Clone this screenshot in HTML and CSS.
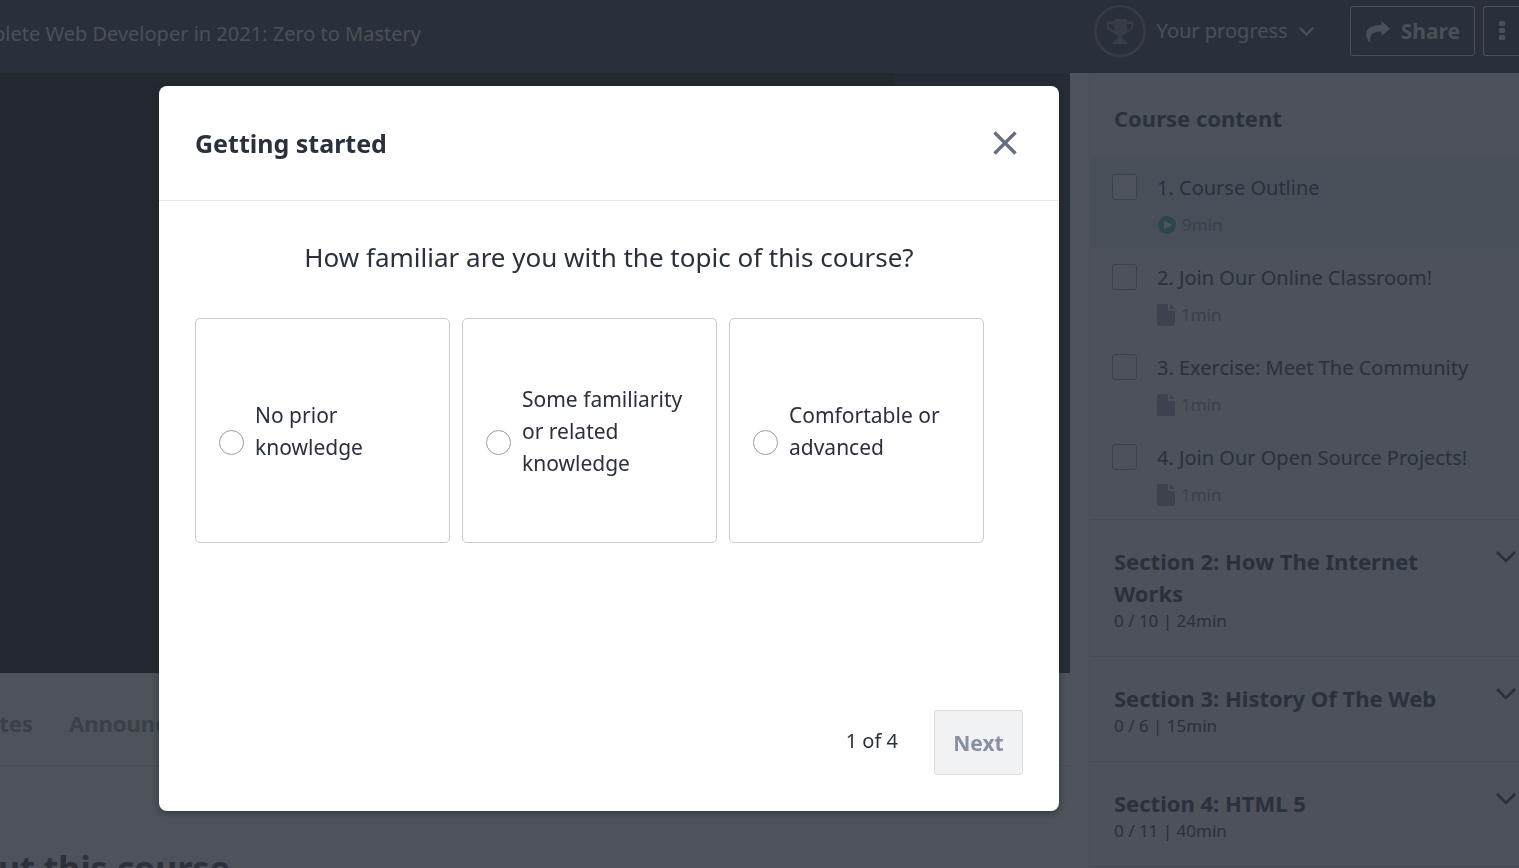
FILE: index.html
```html
<!DOCTYPE html>
<html lang="en">
<head>
<meta charset="utf-8">
<title>The Complete Web Developer in 2021: Zero to Mastery</title>
<link rel="stylesheet" href="styles.css">
</head>
<body>
<svg class="sprite" aria-hidden="true">
  <symbol id="chevron" viewBox="0 0 20 12"><path d="M1 1l9 9 9-9" fill="none" stroke="currentColor" stroke-width="2.6"/></symbol>
  <symbol id="file" viewBox="0 0 18 22"><path d="M2 0h9v7h7v13q0 2-2 2H2q-2 0-2-2V2q0-2 2-2zM13 0l5 5h-5z" fill="currentColor"/></symbol>
</svg>
<header class="topbar">
  <div class="course-title"><span>The Complete Web Developer in 2021: Zero to Mastery</span></div>
  <div class="actions">
    <button class="progress" type="button">
      <svg class="trophy" viewBox="0 0 52 52">
        <circle cx="26" cy="26" r="24.700" fill="none" stroke="currentColor" stroke-width="2.600"/>
        <path d="M20 14h13v2.500h6.500v4q0 5.500-7.500 7.500-2 2.500-3.700 3v3q4.700.500 5.200 5H18.500q.500-4.500 5.200-5v-3q-1.700-.500-3.700-3-7.500-2-7.500-7.500v-4H20zM20 19h-5v1.500q0 3.500 5.500 5zM33 19v6.500q4.500-1.500 4.500-5V19z" fill="currentColor"/>
      </svg>
      <span>Your progress</span>
      <svg class="chev-small"><use href="#chevron"/></svg>
    </button>
    <button class="outline share" type="button">
      <svg class="share-icon" viewBox="0 0 24 21"><path d="M15.500 0l8.500 7.500-8.500 7.500v-4.500C7 10.500 3.500 13 4 21h-1C-2.500 12-.500 4.500 15.500 4z" fill="currentColor"/></svg>
      Share
    </button>
    <button class="outline more" type="button" aria-label="More">
      <svg class="dots" viewBox="0 0 6 20"><path d="M1 0h4l1 1v3l-1 1H1L0 4V1zM1 7h4l1 1v3l-1 1H1l-1-1V8zM1 14h4l1 1v3l-1 1H1l-1-1v-3z" fill="currentColor"/></svg>
    </button>
  </div>
</header>
<div class="layout">
  <main class="main">
    <div class="video"></div>
    <nav class="tabs">
      <div class="tab-past"><a href="#notes">Notes</a></div>
      <a href="#announcements">Announcements</a>
    </nav>
    <div class="about"><h2>About this course</h2></div>
  </main>
  <aside class="sidebar">
    <h2 class="side-head">Course content</h2>
    <ul class="lectures">
      <li class="lecture current">
        <input type="checkbox" id="l1"><div><label for="l1">1. Course Outline</label>
        <p class="meta"><svg class="play" viewBox="0 0 18 18"><circle cx="9" cy="9" r="9" fill="currentColor"/><path class="tri" d="M6 4.500v9L14 9z"/></svg>9min</p></div>
      </li>
      <li class="lecture">
        <input type="checkbox" id="l2"><div><label for="l2">2. Join Our Online Classroom!</label>
        <p class="meta"><svg class="file"><use href="#file"/></svg>1min</p></div>
      </li>
      <li class="lecture">
        <input type="checkbox" id="l3"><div><label for="l3">3. Exercise: Meet The Community</label>
        <p class="meta"><svg class="file"><use href="#file"/></svg>1min</p></div>
      </li>
      <li class="lecture">
        <input type="checkbox" id="l4"><div><label for="l4">4. Join Our Open Source Projects!</label>
        <p class="meta"><svg class="file"><use href="#file"/></svg>1min</p></div>
      </li>
    </ul>
    <section class="section"><div><h3>Section 2: How The Internet Works</h3><p>0 / 10 | 24min</p></div><svg class="chev"><use href="#chevron"/></svg></section>
    <section class="section"><div><h3>Section 3: History Of The Web</h3><p>0 / 6 | 15min</p></div><svg class="chev"><use href="#chevron"/></svg></section>
    <section class="section"><div><h3>Section 4: HTML 5</h3><p>0 / 11 | 40min</p></div><svg class="chev"><use href="#chevron"/></svg></section>
  </aside>
</div>
<div class="overlay">
  <form class="dialog" role="dialog" aria-labelledby="dlg-title">
    <div class="dialog-head">
      <h1 id="dlg-title">Getting started</h1>
      <button class="close" type="button" aria-label="Close"><svg viewBox="0 0 24 24"><path d="M1.500 1.500l21 21M22.500 1.500l-21 21" stroke="currentColor" stroke-width="3.400" fill="none"/></svg></button>
    </div>
    <div class="dialog-body">
      <p class="question">How familiar are you with the topic of this course?</p>
      <div class="options">
        <label class="option"><input type="radio" name="level"><span>No prior knowledge</span></label>
        <label class="option"><input type="radio" name="level"><span>Some familiarity or related knowledge</span></label>
        <label class="option"><input type="radio" name="level"><span>Comfortable or advanced</span></label>
      </div>
    </div>
    <div class="dialog-foot">
      <span class="step">1 of 4</span>
      <button class="next" type="button" disabled>Next</button>
    </div>
  </form>
</div>
</body>
</html>
```
FILE: styles.css
```css
* { box-sizing: border-box; }
body {
  margin: 0;
  height: 100vh;
  overflow: hidden;
  background: #4e525a;
  color: #2a303c;
  font: 21px/32px "Noto Sans", "Open Sans", sans-serif;
}
h1, h2, h3, p, ul { margin: 0; padding: 0; }
h2, h3 { font-size: 22px; line-height: 32px; }
ul { list-style: none; }
button { font: inherit; color: inherit; background: none; border: 0; padding: 0; }
a { color: inherit; text-decoration: none; }
input { appearance: none; margin: 0; flex: none; }
svg { display: block; flex: none; }
.sprite { display: none; }

.topbar {
  display: flex;
  justify-content: space-between;
  height: 73px;
  background: #2a303b;
  color: #4b5058;
}
.course-title {
  display: flex;
  justify-content: flex-end;
  width: 421px;
  padding-top: 18px;
  overflow: hidden;
  font-size: 20px;
  white-space: nowrap;
}
.actions { display: flex; gap: 8px; padding-top: 5px; }
.progress { display: flex; align-items: center; height: 52px; margin-right: 28px; font-size: 20px; }
.progress span { margin: 0 11px; }
.trophy { width: 52px; height: 52px; color: #363b45; }
.chev-small { width: 15px; height: 9px; }
.outline {
  display: flex;
  align-items: center;
  height: 50px;
  margin-top: 1px;
  border: 1px solid #4b5058;
  border-radius: 3px;
  font-weight: 700;
}
.share { gap: 11px; padding: 0 14px 0 15px; }
.share-icon { width: 24px; height: 21px; }
.more { width: 36px; padding-left: 15px; border-right: 0; border-radius: 3px 0 0 3px; }
.dots { width: 6px; height: 20px; }

.layout { display: grid; grid-template-columns: minmax(0, 1fr) 430px; column-gap: 19px; }
.video { height: 600px; background: linear-gradient(90deg, #24282f 83.5%, #262c36 83.5%); }
.tabs {
  display: flex;
  gap: 36px;
  height: 93px;
  padding-top: 34px;
  border-bottom: 1px solid #484c54;
  color: #3a3f48;
  font-size: 22px;
  font-weight: 700;
}
.tab-past { display: flex; justify-content: flex-end; width: 33px; overflow: hidden; }
.about { display: flex; justify-content: flex-end; width: 230px; padding-top: 80px; overflow: hidden; white-space: nowrap; }
.about h2 { font-size: 34px; line-height: 44px; color: #2c313b; }

.sidebar { border-left: 1px solid #484d56; background: #4d5159; }
.side-head { padding: 29px 24px 23px; border-bottom: 1px solid #484d56; }
.lectures { padding-bottom: 1px; }
.lecture { display: flex; gap: 20px; height: 90px; padding: 14px 0 0 22px; font-size: 20px; white-space: nowrap; }
.current { background: #484f58; }
.lecture input { width: 25px; height: 26px; margin-top: 2px; border: 1px solid #3b404b; border-radius: 3px; }
.current input { background: #4e525a; }
.meta { display: flex; align-items: center; gap: 6px; height: 28px; margin-top: 7px; color: #3b404b; font-size: 17px; }
.play { width: 18px; height: 18px; margin-left: 1px; color: #2c4650; }
.tri { fill: #4e565e; }
.file { width: 18px; height: 22px; color: #3d424e; }
.section {
  display: flex;
  justify-content: space-between;
  padding: 25px 3px 23px 24px;
  border-top: 1px solid #464b53;
}
.section:last-child { border-bottom: 1px solid #464b53; }
.section > div { max-width: 330px; }
.section p { font-size: 17px; line-height: 24px; }
.chev { width: 20px; height: 12px; margin-top: 6px; }

.overlay { position: fixed; inset: 0; padding: 86px 0 57px 159px; }
.dialog {
  display: flex;
  flex-direction: column;
  width: 900px;
  height: 100%;
  background: #fff;
  border-radius: 8px;
  box-shadow: 0 2px 6px rgba(20, 30, 40, .5);
}
.dialog-head {
  display: flex;
  align-items: center;
  justify-content: space-between;
  height: 115px;
  padding: 0 42px 0 36px;
  border-bottom: 1px solid #e6e7e9;
}
h1 { font-size: 25px; line-height: 36px; }
.close { color: #686f7d; }
.close svg { width: 24px; height: 24px; }
.dialog-body { flex: 1; padding: 38px 36px 0; }
.question { font-size: 26px; line-height: 36px; text-align: center; }
.options { display: grid; grid-template-columns: repeat(3, 255px); gap: 12px; margin-top: 43px; }
.option {
  display: flex;
  align-items: center;
  gap: 11px;
  height: 225px;
  padding: 0 23px;
  border: 1px solid #cacbcd;
  border-radius: 5px;
}
.option input { width: 25px; height: 25px; margin-top: 24px; border: 1px solid #989dae; border-radius: 50%; }
.dialog-foot { display: flex; align-items: center; justify-content: flex-end; gap: 36px; padding: 0 36px 36px; }
.step { padding-bottom: 4px; font-size: 20px; }
.next {
  width: 89px;
  height: 65px;
  background: #f1f2f4;
  border: 1px solid #dcdde0;
  border-radius: 3px;
  color: #8a90a3;
  font-weight: 700;
}
```
